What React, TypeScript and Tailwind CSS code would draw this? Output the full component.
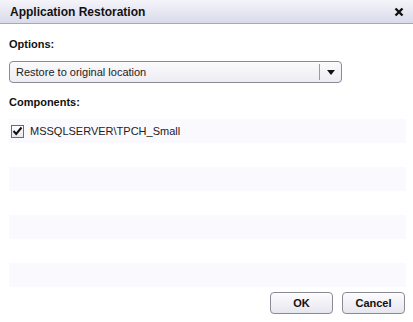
import React from 'react';

const rows = ['MSSQLSERVER\\TPCH_Small', '', '', '', '', '', ''];

export default function App() {
  return (
    <div className="w-[413px] h-[322px] bg-white flex flex-col overflow-hidden" style={{ fontFamily: '"Liberation Sans", Arial, sans-serif' }}>
      {/* Title bar */}
      <div className="h-[24px] flex items-center justify-between pl-[10px] pr-[8px] bg-gradient-to-b from-[#f4f4fa] to-[#d9dbea] border-b border-[#a6a8b6]">
        <span className="text-[12px] font-bold text-[#111]">Application Restoration</span>
        <svg width="10" height="10" viewBox="0 0 10 10" className="mr-[1px]">
          <path d="M1.5 1.5 L8.5 8.5 M8.5 1.5 L1.5 8.5" stroke="#111" strokeWidth="2.4" />
        </svg>
      </div>

      <div className="flex flex-col px-[9px]">
        <div className="text-[11px] font-bold text-[#111] mt-[13px] leading-[14px]">Options:</div>

        {/* Select */}
        <div className="mt-[10px] w-[333px] h-[22px] rounded-[4px] border border-[#8a8a96] bg-gradient-to-b from-[#fbfbfd] to-[#ececf2] flex items-center">
          <span className="flex-1 pl-[6px] text-[11px] text-[#222]">Restore to original location</span>
          <div className="w-px h-[16px] bg-[#9a9aa6]" />
          <div className="w-[21px] flex justify-center">
            <svg width="8" height="5" viewBox="0 0 8 5">
              <path d="M0 0 H8 L4 5 Z" fill="#111" />
            </svg>
          </div>
        </div>

        <div className="text-[11px] font-bold text-[#111] mt-[12px] leading-[14px]">Components:</div>

        {/* List */}
        <div className="mt-[10px] w-[397px] flex flex-col">
          {rows.map((r, i) => (
            <div key={i} className={`h-[24px] flex items-center ${i % 2 === 0 ? 'bg-[#faf9fd]' : 'bg-white'}`}>
              {r && (
                <>
                  <div className="ml-[2px] w-[13px] h-[13px] border border-[#6b6b76] bg-gradient-to-b from-[#ffffff] to-[#e8e8ee] flex items-center justify-center">
                    <svg width="11" height="10" viewBox="0 0 11 10">
                      <path d="M1.5 5 L4.2 8 L9.5 1.5" stroke="#111" strokeWidth="2" fill="none" />
                    </svg>
                  </div>
                  <span className="ml-[6px] text-[11px] text-[#222]">{r}</span>
                </>
              )}
            </div>
          ))}
        </div>

        {/* Buttons */}
        <div className="mt-[5px] flex justify-end gap-[9px] pr-[-1px] mr-[-1px]">
          <button className="w-[63px] h-[22px] rounded-[4px] border border-[#8a8a96] bg-gradient-to-b from-[#fdfdfe] to-[#e6e6ee] text-[11px] font-bold text-[#111]">OK</button>
          <button className="w-[63px] h-[22px] rounded-[4px] border border-[#8a8a96] bg-gradient-to-b from-[#fdfdfe] to-[#e6e6ee] text-[11px] font-bold text-[#111]">Cancel</button>
        </div>
      </div>
    </div>
  );
}
